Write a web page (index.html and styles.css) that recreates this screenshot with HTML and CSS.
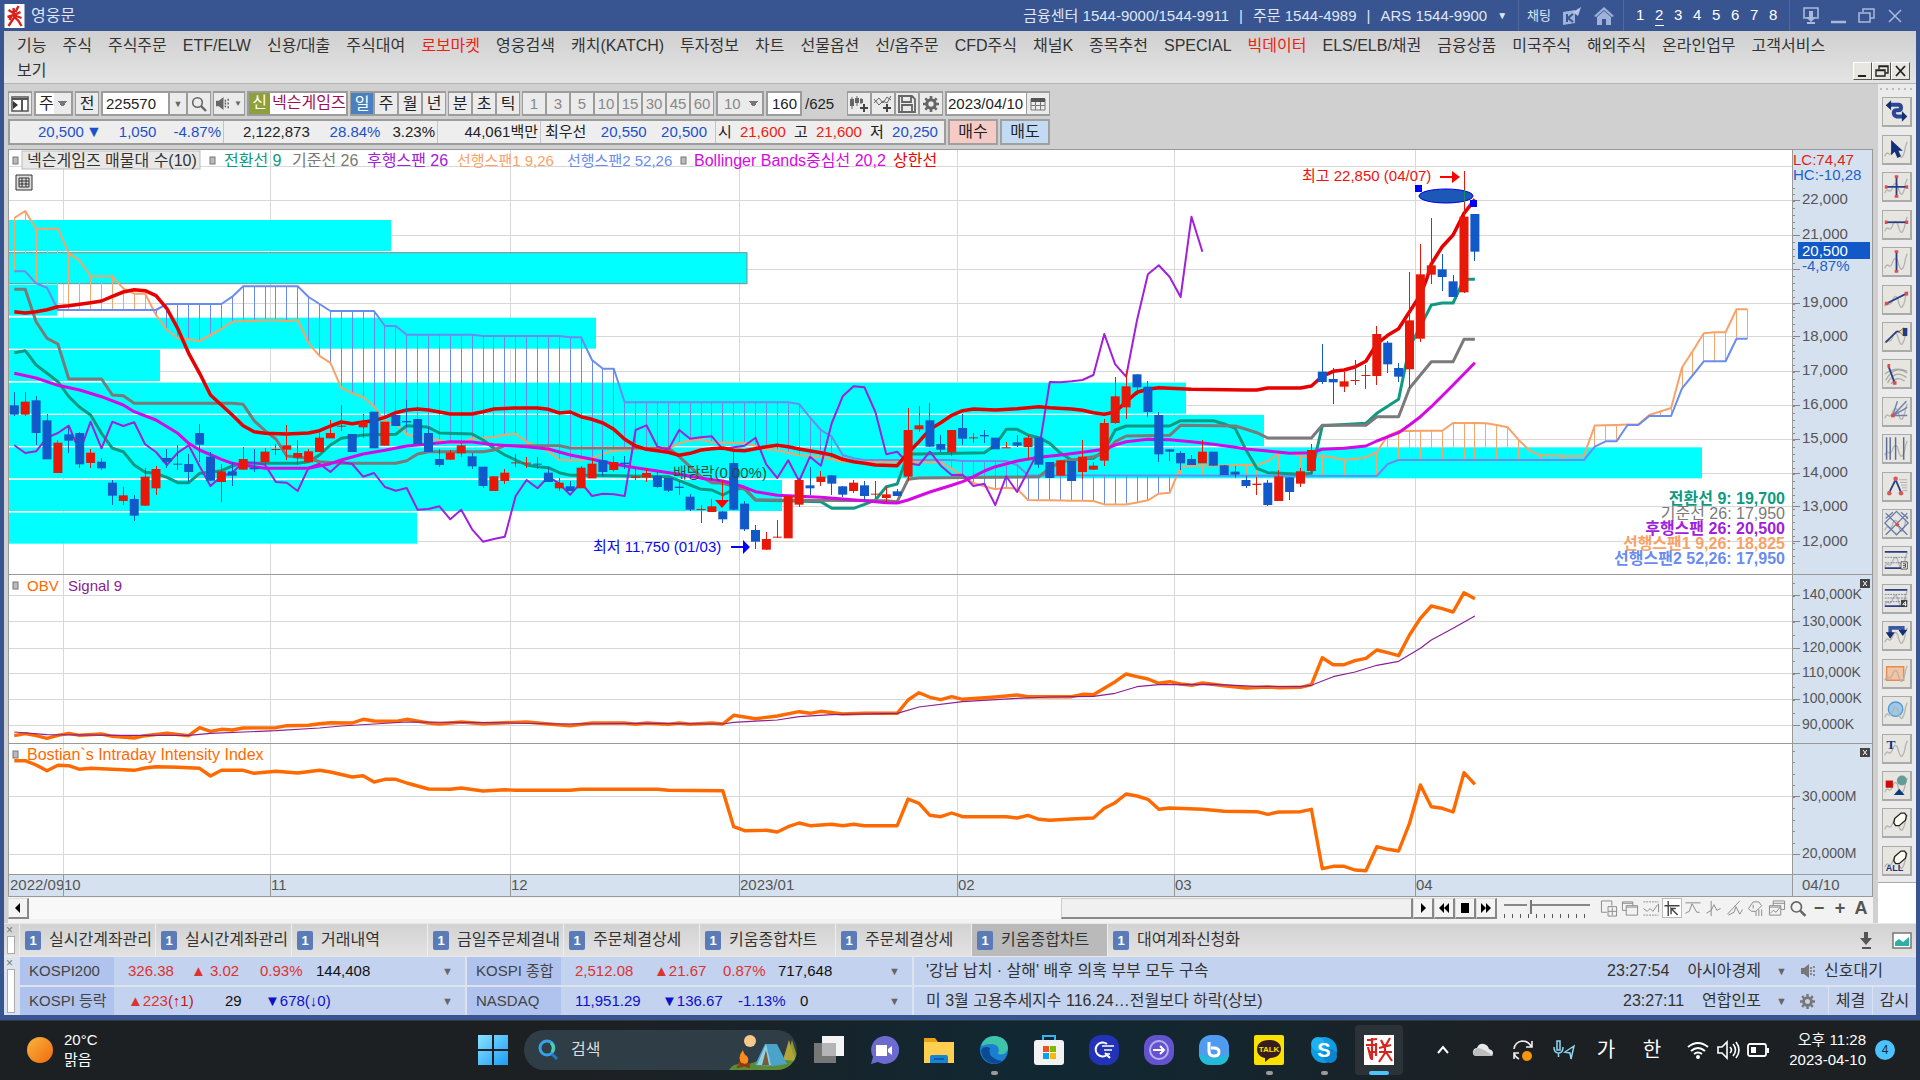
FILE: index.html
```html
<!DOCTYPE html>
<html lang="ko">
<head>
  <meta charset="UTF-8" />
  <meta name="viewport" content="width=device-width, initial-scale=1.0" />
  <title>영웅문</title>
  <link rel="stylesheet" href="styles.css">
</head>
<body>
  <svg class="defs" aria-hidden="true">
    <symbol id="wave" viewBox="0 0 30 29"><path d="M2 22q2-5 4-3t4-2q3-9 6-4q3 12 5 10q3-3 4-12l2-5" fill="none" stroke="#b4b4b0" stroke-width="1.5"/></symbol>
    <symbol id="gear" viewBox="0 0 16 16"><circle cx="8" cy="8" r="4.2" fill="none" stroke="currentColor" stroke-width="3"/><path d="M8 0v3M8 13v3M0 8h3M13 8h3M2.3 2.3l2 2M11.7 11.7l2 2M13.7 2.3l-2 2M4.3 11.7l-2 2" stroke="currentColor" stroke-width="2.6"/></symbol>
    <symbol id="glass" viewBox="0 0 16 16"><circle cx="6.5" cy="6.5" r="4.8" fill="none" stroke="currentColor" stroke-width="1.6"/><path d="M10 10l5 5" stroke="currentColor" stroke-width="2.4"/></symbol>
    <symbol id="speaker" viewBox="0 0 16 16"><path d="M0 5h3l5-4v14l-5-4H0z" fill="currentColor"/><path d="M10 4v2M10 7v2M10 10v2M13 3v2M13 7v2M13 11v2" stroke="currentColor" stroke-width="1.6"/></symbol>
  </svg>

  <div class="window">
    <!-- 타이틀바 -->
    <header class="titlebar">
      <svg class="app-icon" viewBox="0 0 20 24"><path fill="#fff" d="M0 0h20v24H0z"/><path d="M14 2l-3 6M4 6l5 3M16 8l-6 3M3 13l6-2 8 3M9 4l1 9-6 9M10 13l4 4 3 5M7 12l-2 4" fill="none" stroke="#d8201c" stroke-width="2.4"/></svg>
      <h1>영웅문</h1>
      <div class="contacts">
        <span>금융센터 1544-9000/1544-9911</span><i>|</i><span>주문 1544-4989</span><i>|</i><span>ARS 1544-9900</span><span class="caret">▼</span>
      </div>
      <div class="title-tools">
        <button class="chat">채팅</button>
        <svg width="20" height="20" viewBox="0 0 20 20"><path d="M1 6l12-2v13l-12 2z" fill="#9fb2da"/><path d="M5 8v8M11 8l-5 4 5 4" stroke="#385591" fill="none" stroke-width="2"/><path d="M11 6l8-5-3 9z" fill="#b7c6e8"/></svg>
        <svg width="22" height="20" viewBox="0 0 22 20"><path d="M11 1L1 10l2 1 8-7 8 7 2-1z" fill="#9fb2da"/><path d="M4 11l7-6 7 6v8h-5v-6H9v6H4z" fill="#9fb2da"/></svg>
      </div>
      <nav class="screens">
        <a href="#">1</a><a href="#" class="on">2</a><a href="#">3</a><a href="#">4</a><a href="#">5</a><a href="#">6</a><a href="#">7</a><a href="#">8</a>
      </nav>
      <div class="win-buttons">
        <button aria-label="화면"><svg width="18" height="18" viewBox="0 0 18 18"><path d="M2 1h14v10H2z" fill="none" stroke="#a9b9dc" stroke-width="1.6"/><path d="M7 4h4v6h3l-5 5-5-5h3zM5 15h8v2H5z" fill="#a9b9dc"/></svg></button>
        <button aria-label="최소화"><svg width="18" height="18" viewBox="0 0 18 18"><path d="M1 15h15" stroke="#a9b9dc" stroke-width="2.5"/></svg></button>
        <button aria-label="복원"><svg width="18" height="18" viewBox="0 0 18 18"><path d="M5 5V2h11v9h-4M1 6h11v9H1z" fill="none" stroke="#a9b9dc" stroke-width="1.5"/></svg></button>
        <button aria-label="닫기"><svg width="18" height="18" viewBox="0 0 18 18"><path d="M3 3l12 12M15 3L3 15" stroke="#a9b9dc" stroke-width="1.5"/></svg></button>
      </div>
    </header>

    <!-- 메뉴 -->
    <div class="menubar">
      <nav class="menu">
        <a href="#">기능</a><a href="#">주식</a><a href="#">주식주문</a><a href="#">ETF/ELW</a><a href="#">신용/대출</a><a href="#">주식대여</a><a href="#" class="hot">로보마켓</a><a href="#">영웅검색</a><a href="#">캐치(KATCH)</a><a href="#">투자정보</a><a href="#">차트</a><a href="#">선물옵션</a><a href="#">선/옵주문</a><a href="#">CFD주식</a><a href="#">채널K</a><a href="#">종목추천</a><a href="#">SPECIAL</a><a href="#" class="hot">빅데이터</a><a href="#">ELS/ELB/채권</a><a href="#">금융상품</a><a href="#">미국주식</a><a href="#">해외주식</a><a href="#">온라인업무</a><a href="#">고객서비스</a>
      </nav>
      <div class="menu-second">
        <a href="#">보기</a>
        <div class="mdi">
          <button aria-label="창 최소화"><svg width="14" height="14" viewBox="0 0 14 14"><path d="M2 12h8" stroke="#222" stroke-width="2"/></svg></button>
          <button aria-label="창 복원"><svg width="14" height="14" viewBox="0 0 14 14"><path d="M4 5V2h9v7h-3M1 6h9v6H1zM4 2.500h9M1 6.500h9" fill="none" stroke="#222" stroke-width="1.4"/></svg></button>
          <button aria-label="창 닫기"><svg width="14" height="14" viewBox="0 0 14 14"><path d="M2 2l9 10M11 2L2 12" stroke="#222" stroke-width="1.8"/></svg></button>
        </div>
      </div>
    </div>

    <div class="workspace">
      <main class="chart-window">
        <!-- 종목 툴바 -->
        <div class="toolbar">
          <button class="btn" aria-label="패널"><svg width="18" height="16" viewBox="0 0 18 16"><path d="M1 1h16v14H1z" fill="#fff" stroke="#555" stroke-width="1.500"/><path d="M1 3h16M11 3v12" stroke="#555" stroke-width="2"/><path d="M2 5l5 4-5 4z" fill="#333"/></svg></button>
          <select class="field kind" aria-label="구분"><option>주</option></select>
          <button class="btn">전</button>
          <div class="group">
            <input class="field code" aria-label="종목코드" value="225570"><button class="btn narrow">▼</button><button class="btn" aria-label="검색"><svg width="16" height="16" color="#666"><use href="#glass"/></svg></button>
          </div>
          <div class="group">
            <button class="btn short" aria-label="소리"><svg width="15" height="15" color="#666"><use href="#speaker"/></svg></button><button class="btn thin">▼</button>
          </div>
          <div class="stock"><b>신</b><span>넥슨게임즈</span></div>
          <div class="group period">
            <button class="btn on">일</button><button class="btn">주</button><button class="btn">월</button><button class="btn">년</button>
          </div>
          <div class="group period">
            <button class="btn">분</button><button class="btn">초</button><button class="btn">틱</button>
          </div>
          <div class="group period off">
            <button class="btn">1</button><button class="btn">3</button><button class="btn">5</button><button class="btn">10</button><button class="btn">15</button><button class="btn">30</button><button class="btn">45</button><button class="btn">60</button>
          </div>
          <select class="field tick" aria-label="틱 단위" disabled><option>10</option></select>
          <label class="count"><input class="field" value="160"><span>/625</span></label>
          <div class="group icons">
            <button class="btn" aria-label="차트 추가"><svg width="20" height="18" viewBox="0 0 20 18"><path d="M3 2v12M8 1v10M12 3v6" stroke="#666" stroke-width="1"/><path d="M1 4h4v7H1zM6 3h4v5H6zM11 4h3v4h-3z" fill="#666"/><path d="M15 9v8M11 13h8" stroke="#444" stroke-width="2"/></svg></button>
            <button class="btn" aria-label="지표 추가"><svg width="20" height="18" viewBox="0 0 20 18"><path d="M1 8l5-5 4 5 4-6 4 3M1 4l5 6 4-4 4 2 4-7" stroke="#666" fill="none"/><path d="M14 9v8M10 13h8" stroke="#444" stroke-width="2"/></svg></button>
            <button class="btn" aria-label="저장"><svg width="18" height="18" viewBox="0 0 18 18"><path d="M1 1h13l3 3v13H1zM4 1v6h9V1M4 17v-7h10v7" fill="none" stroke="#666" stroke-width="1.800"/></svg></button>
            <button class="btn" aria-label="설정"><svg width="16" height="16" color="#666"><use href="#gear"/></svg></button>
          </div>
          <div class="group">
            <input class="field date" aria-label="날짜" value="2023/04/10"><button class="btn" aria-label="달력"><svg width="16" height="14" viewBox="0 0 16 14"><path d="M1 2h14v11H1zM1 8.500h14M5.500 5v8M10.500 5v8" fill="none" stroke="#777"/><path d="M1 1h14v4H1z" fill="#555"/></svg></button>
          </div>
        </div>

        <div class="quote-row">
          <div class="quotes">
            <div class="cell price"><span class="blue">20,500<b>▼</b></span><span class="blue">1,050</span><span class="blue">-4.87%</span></div>
            <div class="cell vol"><span>2,122,873</span><span class="blue">28.84%</span><span>3.23%</span></div>
            <div class="cell amount"><span>44,061백만</span></div>
            <div class="cell best"><span>최우선</span><span class="blue">20,550</span><span class="blue">20,500</span></div>
            <div class="cell ohl"><span>시</span><span class="red">21,600</span><span>고</span><span class="red">21,600</span><span>저</span><span class="blue">20,250</span></div>
          </div>
          <button class="order buy">매수</button>
          <button class="order sell">매도</button>
        </div>

        <!-- 차트 -->
        <svg class="chart" id="chart" viewBox="8 149 1865 748" role="img" aria-label="넥슨게임즈 일봉 차트"></svg>

        <div class="scroll-row">
          <button class="raised" aria-label="왼쪽"><svg width="12" height="12" viewBox="0 0 12 12"><path d="M8 1v10L3 6z"/></svg></button>
          <div class="track"><div class="thumb"></div></div>
          <div class="player">
            <button class="raised" aria-label="재생"><svg width="12" height="12" viewBox="0 0 12 12"><path d="M4 1l5 5-5 5z"/></svg></button>
            <button class="raised" aria-label="뒤로"><svg width="12" height="12" viewBox="0 0 12 12"><path d="M6 1v10L1 6zM11 1v10L6 6z"/></svg></button>
            <button class="raised" aria-label="정지"><svg width="12" height="12" viewBox="0 0 12 12"><path d="M2 1h8v10H2z"/></svg></button>
            <button class="raised" aria-label="앞으로"><svg width="12" height="12" viewBox="0 0 12 12"><path d="M1 1v10l5-5zM6 1v10l5-5z"/></svg></button>
          </div>
          <input class="speed" type="range" min="0" max="100" value="28" aria-label="속도">
          <div class="chart-tools">
            <button aria-label="창 추가"><svg viewBox="0 0 18 18"><path d="M12 6V1H1v12h6M8 7h9v10H8zM12.500 8v8M8 12h9"/></svg></button>
            <button aria-label="창 복사"><svg viewBox="0 0 18 18"><path d="M5 11H1V2h11v4M5 6h12v10H5zM1 3.500h11M5 7.500h12"/></svg></button>
            <button aria-label="영역"><svg viewBox="0 0 18 18"><path d="M1 2h16M1 16h16" stroke-dasharray="2 1"/><path d="M1 9l4 3 3-3 3 3 5-7M17 4v9"/></svg></button>
            <button class="on" aria-label="십자선"><svg viewBox="0 0 18 18"><path d="M5 1v16M1 6h16M8 15V9l7 7M8 9h5" stroke="#444" stroke-width="1.500"/></svg></button>
            <button aria-label="수평선"><svg viewBox="0 0 18 18"><path d="M1 3h16M1 14l4-2 3-8 5 9h3"/></svg></button>
            <button aria-label="수직선"><svg viewBox="0 0 18 18"><path d="M6 1v16M1 14l5-3 3-6 3 6 4-2"/></svg></button>
            <button aria-label="추세선"><svg viewBox="0 0 18 18"><path d="M1 15L14 1M2 16l6-3 2-6 4 8 3-5"/></svg></button>
            <button aria-label="전체 지우기"><svg viewBox="0 0 18 18"><path d="M6 2h6l3 4-6 6H4L1 9zM6 9V5M9 12v5M12 10v7M15 10v7"/></svg></button>
            <button aria-label="차트 겹치기"><svg viewBox="0 0 18 18"><path d="M5 6V1h12v9h-4M1 6h12v10H1zM2 14l3-3 3 2 4-5M5 3.500h12M1 7.500h12"/></svg></button>
            <button aria-label="돋보기"><svg viewBox="0 0 16 16" color="#666"><use href="#glass"/></svg></button>
            <button class="glyph">−</button>
            <button class="glyph">+</button>
            <button class="glyph">A</button>
          </div>
        </div>
      </main>

      <!-- 그리기 도구 -->
      <aside class="palette">
        <div class="tools">
          <button aria-label="전환"><svg viewBox="0 0 30 29"><path d="M8 7h9q3 0 3 3t-3 3h-2q-3 0-3 3t3 4h8" fill="none" stroke="#2c4796" stroke-width="4.500"/><path d="M9 2v11L3 7.500zM21 14v12l6-6z" fill="#16306f"/></svg></button>
          <button aria-label="선택"><svg viewBox="0 0 30 29"><use href="#wave"/><path d="M9 4v17l4-4 3 7 4-2-3-6h5z" fill="#152f7c"/></svg></button>
          <button aria-label="십자"><svg viewBox="0 0 30 29"><use href="#wave"/><path d="M15 3v23M3 15h24" stroke="#2a3e86" stroke-width="2"/><path d="M13 2h4v3h-4zM13 24h4v3h-4zM2 13h3v4H2zM25 13h3v4h-3z" fill="#e34a4a"/></svg></button>
          <button aria-label="수평선"><svg viewBox="0 0 30 29"><use href="#wave"/><path d="M3 12h24" stroke="#2a3e86" stroke-width="2"/><path d="M2 10h3v4H2zM25 10h3v4h-3z" fill="#e34a4a"/></svg></button>
          <button aria-label="수직선"><svg viewBox="0 0 30 29"><use href="#wave"/><path d="M15 3v22" stroke="#2a3e86" stroke-width="2"/><path d="M13 2h4v3h-4zM13 24h4v3h-4z" fill="#e34a4a"/></svg></button>
          <button aria-label="추세선"><svg viewBox="0 0 30 29"><use href="#wave"/><path d="M4 19L26 8" stroke="#2a3e86" stroke-width="2"/><path d="M2 17h4v4H2zM24 6h4v4h-4z" fill="#e34a4a"/></svg></button>
          <button aria-label="펜"><svg viewBox="0 0 30 29"><use href="#wave"/><path d="M3 21L15 9h4" stroke="#2a3e86" stroke-width="2" fill="none"/><path d="M18 9l5-4v9z" fill="#f0d9a0" stroke="#8a6a20"/><path d="M22 5h5v9h-5z" fill="#223a86"/></svg></button>
          <button aria-label="원호"><svg viewBox="0 0 30 29"><path d="M3 22q10-18 24-8M5 25q9-16 21-6M9 26q7-10 15-3M2 15q12-9 25-3" fill="none" stroke="#a8a8a4" stroke-width="1.500"/><path d="M6 6l7 19" stroke="#2a3e86" stroke-width="2"/><path d="M5 4h3v4H5zM11 23h4v4h-4z" fill="#e34a4a"/></svg></button>
          <button aria-label="부채꼴"><svg viewBox="0 0 30 29"><use href="#wave"/><path d="M11 19L16 3M11 19L26 3M11 19l16-9M11 19h16" stroke="#7280ad" stroke-width="1.600"/><path d="M9 17h4v4H9z" fill="#e34a4a"/></svg></button>
          <button aria-label="시간대"><svg viewBox="0 0 30 29"><use href="#wave"/><path d="M4 2v25M8 2v25M14 2v25M23 2v25" stroke="#5b6b9e" stroke-width="1.600"/></svg></button>
          <button aria-label="파동"><svg viewBox="0 0 30 29"><path d="M18 7h9M19 10h8M20 13h7M21 16h6M22 19h5" stroke="#aaa"/><path d="M7 21l7-14 6 14" fill="none" stroke="#2a3e86" stroke-width="2"/><g fill="#dd5656"><circle cx="14" cy="6" r="2.500"/><circle cx="7" cy="22" r="2.500"/><circle cx="20" cy="22" r="2.500"/></g></svg></button>
          <button aria-label="격자"><svg viewBox="0 0 30 29"><use href="#wave"/><path d="M3 3l24 24M27 3L3 27M15 1l13 13-13 13L2 14zM3 9l8-7M20 2l8 7" fill="none" stroke="#6878ac" stroke-width="1.400"/><circle cx="16" cy="16" r="2" fill="#e34a4a"/></svg></button>
          <button aria-label="3분할"><svg viewBox="0 0 30 29"><use href="#wave"/><path d="M2 5h25M2 23h18" stroke="#2a3e86" stroke-width="2"/><path d="M2 11h25M2 17h25" stroke="#7280ad" stroke-dasharray="2 1"/><path d="M20 16h7v8h-7zM22 18h3v4h-3M22 20h3" fill="#fff" stroke="#444"/></svg></button>
          <button aria-label="4분할"><svg viewBox="0 0 30 29"><use href="#wave"/><path d="M2 5h25M2 23h18" stroke="#2a3e86" stroke-width="2"/><path d="M2 10h25M2 14h25M2 18h25" stroke="#7280ad" stroke-dasharray="2 1"/><path d="M20 16h7v8h-7z" fill="#444"/><path d="M25 23v-5l-3 3h4" fill="none" stroke="#fff"/></svg></button>
          <button aria-label="되돌리기"><svg viewBox="0 0 30 29"><use href="#wave"/><path d="M8 12V6h14v4" fill="none" stroke="#3a59a8" stroke-width="4"/><path d="M3 11h10l-5 7zM17 8h10l-5 7z" fill="#16306f"/></svg></button>
          <button aria-label="사각형"><svg viewBox="0 0 30 29"><path d="M4 7h19v15H4z" fill="#f4c3a0" stroke="#e58a50" stroke-width="1.500"/><use href="#wave"/></svg></button>
          <button aria-label="원"><svg viewBox="0 0 30 29"><circle cx="14" cy="13" r="8" fill="#9ec8ea" stroke="#4f9ad6" stroke-width="1.500"/><use href="#wave"/></svg></button>
          <button aria-label="텍스트"><svg viewBox="0 0 30 29"><use href="#wave"/><text x="4" y="15" class="tool-t">T</text></svg></button>
          <button aria-label="도형"><svg viewBox="0 0 30 29"><use href="#wave"/><path d="M3 9h8v8H3z" fill="#cf0a0a"/><circle cx="21" cy="9" r="5.500" fill="#629c96"/><path d="M18 18l6 7H12z" fill="#0b3a80"/></svg></button>
          <button aria-label="지우개"><svg viewBox="0 0 30 29"><use href="#wave"/><path d="M13 10l7-6h4l2 3-1 5-7 6h-4l-2-3z" fill="#fffdf2" stroke="#222" stroke-width="1.500"/></svg></button>
          <button aria-label="모두 지우기"><svg viewBox="0 0 30 29"><use href="#wave"/><path d="M13 10l7-6h4l2 3-1 5-7 6h-4l-2-3z" fill="#fffdf2" stroke="#222" stroke-width="1.500"/><text x="3" y="26" class="tool-all">ALL</text></svg></button>
        </div>
      </aside>
    </div>

    <!-- 화면 탭 -->
    <div class="tabs">
      <div class="grip">×</div>
      <button class="tab"><b>1</b>실시간계좌관리</button>
      <button class="tab"><b>1</b>실시간계좌관리</button>
      <button class="tab"><b>1</b>거래내역</button>
      <button class="tab"><b>1</b>금일주문체결내</button>
      <button class="tab"><b>1</b>주문체결상세</button>
      <button class="tab"><b>1</b>키움종합차트</button>
      <button class="tab"><b>1</b>주문체결상세</button>
      <button class="tab on"><b>1</b>키움종합차트</button>
      <button class="tab"><b>1</b>대여계좌신청화</button>
      <div class="tab-tools">
        <button aria-label="내리기"><svg width="12" height="17" viewBox="0 0 12 17"><path d="M4 0h4v6h4l-6 7-6-7h4zM2 15h9v2H2z" fill="#555"/></svg></button>
        <button aria-label="그림"><svg width="20" height="17" viewBox="0 0 20 17"><path d="M1 1h18v15H1z" fill="#fff" stroke="#777" stroke-width="1.500"/><path d="M3 14v-4l4-3 4 3 6-5v9z" fill="#2fb0a2"/></svg></button>
      </div>
    </div>

    <!-- 지수 / 뉴스 -->
    <footer class="ticker">
      <div class="grip">×</div>
      <div class="index first">
        <div class="line"><span class="name">KOSPI200</span><span class="up c1">326.38</span><span class="up c2">▲ 3.02</span><span class="up c3">0.93%</span><span>144,408</span><i>▼</i></div>
        <div class="line"><span class="name">KOSPI 등락</span><span class="up d1">▲223<em>(↑1)</em></span><span class="d2">29</span><span class="down">▼678(↓0)</span><i>▼</i></div>
      </div>
      <div class="index">
        <div class="line"><span class="name">KOSPI 종합</span><span class="up e1">2,512.08</span><span class="up e2">▲21.67</span><span class="up e3">0.87%</span><span>717,648</span><i>▼</i></div>
        <div class="line"><span class="name">NASDAQ</span><span class="down n1">11,951.29</span><span class="down n2">▼136.67</span><span class="down n3">-1.13%</span><span>0</span><i>▼</i></div>
      </div>
      <div class="news">
        <div class="line"><a href="#">'강남 납치 · 살해' 배후 의혹 부부 모두 구속</a><time>23:27:54</time><span class="press">아시아경제</span><i>▼</i><button class="wait"><svg width="18" height="16"><use href="#speaker"/></svg>신호대기</button></div>
        <div class="line"><a href="#">미 3월 고용추세지수 116.24…전월보다 하락(상보)</a><time>23:27:11</time><span class="press">연합인포</span><i>▼</i><button class="set" aria-label="설정"><svg width="15" height="15"><use href="#gear"/></svg></button><button class="box">체결</button><button class="box">감시</button></div>
      </div>
    </footer>
  </div>

  <!-- 작업 표시줄 -->
  <div class="taskbar">
    <div class="weather"><span class="sun"></span><p>20°C<br>맑음</p></div>
    <div class="apps">
      <button class="start" aria-label="시작"><svg width="30" height="30" viewBox="0 0 30 30"><path d="M0 0h14v14H0zM16 0h14v14H16zM0 16h14v14H0zM16 16h14v14H16z" fill="url(#win)"/><defs><linearGradient id="win" x1="0" y1="0" x2="1" y2="1"><stop stop-color="#8ae2ff"/><stop offset="1" stop-color="#1a9cf6"/></linearGradient></defs></svg></button>
      <label class="search"><svg width="22" height="22" viewBox="0 0 22 22"><circle cx="10" cy="9" r="7" fill="none" stroke="#35a3e6" stroke-width="3"/><path d="M14 4q4 4 1 9" fill="none" stroke="#4fd39a" stroke-width="3"/><path d="M15 15l5 5" stroke="#1f78cc" stroke-width="3"/></svg><input type="text" placeholder="검색">
        <svg class="camp" width="68" height="40" viewBox="0 0 68 40"><path d="M0 40q4-8 20-6q20-8 48-4v3q-4 7-12 7z" fill="#5d8a35"/><circle cx="21" cy="11" r="6" fill="#f6c98a"/><path d="M57 30l6-20 5 16v6z" fill="#8d9c2c"/><path d="M60 10l-6 20h12z" fill="#b0a43a"/><path d="M36 14l12 0 10 20-14 2-18-1z" fill="#4aa3c8"/><path d="M37 14l5 21H28z" fill="#8fd0e6"/><path d="M37 20l3 15h-7z" fill="#7b5b35"/><path d="M14 36q-7-8 0-16q1 5 4 6q4 6-4 10z" fill="#ff8a1c"/><path d="M8 37l13-3M9 33l12 4" stroke="#8a3f12" stroke-width="2.500"/></svg></label>
      <button aria-label="작업 보기"><svg viewBox="0 0 30 30"><path d="M0 8h22v20H0z" fill="#777"/><path d="M8 1h22v20H8z" fill="#f4f4f4"/><path d="M8 8h14v13H8z" fill="#b5b5b5"/></svg></button>
      <button aria-label="채팅"><svg viewBox="0 0 30 30"><path d="M15 1a14 14 0 1 1-6 26l-7 2 2-7A14 14 0 0 1 15 1z" fill="#6d6ad0"/><path d="M7 10h11v11H7zM19 14l4-3v9l-4-3z" fill="#fff"/></svg></button>
      <button aria-label="탐색기"><svg viewBox="0 0 30 30"><path d="M0 3h11l3 4h14v6H0z" fill="#e7a11a"/><path d="M0 7h30v21H0z" fill="#ffd04f"/><path d="M6 28v-6q0-2 2-2h14q2 0 2 2v6z" fill="#1583d8"/><path d="M10 24h10" stroke="#0c5ca8" stroke-width="2"/></svg></button>
      <button class="run" aria-label="엣지"><svg viewBox="0 0 30 30"><circle cx="15" cy="15" r="14" fill="#1a7fd0"/><path d="M2 11Q6 0 17 1q12 2 12 13q-2 7-10 5q3-9-6-10q-6 0-11 2z" fill="#3fc3a8"/><path d="M11 13q-3 10 12 13q-6 5-14 1q-7-5-7-12q3-5 9-2z" fill="#0c4a94"/></svg></button>
      <button aria-label="스토어"><svg viewBox="0 0 30 30"><path d="M9 6V1h12v5" fill="none" stroke="#37b4ee" stroke-width="2"/><rect y="5" width="30" height="25" rx="3" fill="#f2f2f2"/><path d="M9 11h6v6H9z" fill="#f25022"/><path d="M16 11h6v6h-6z" fill="#7fba00"/><path d="M9 18h6v6H9z" fill="#00a4ef"/><path d="M16 18h6v6h-6z" fill="#ffb900"/></svg></button>
      <button aria-label="검색앱"><svg viewBox="0 0 30 30"><rect width="30" height="30" rx="12" fill="#2233b8"/><path d="M18 9a7 7 0 1 0 0 11M16 18l5 5" fill="none" stroke="#fff" stroke-width="2"/><path d="M13 11h12M15 15h8M17 19h4" stroke="#fff" stroke-width="1.500"/></svg></button>
      <button aria-label="전송앱"><svg viewBox="0 0 30 30"><rect width="30" height="30" rx="12" fill="#6353cf"/><circle cx="15" cy="15" r="9" fill="none" stroke="#b9b0f4" stroke-width="2"/><path d="M9 15h11M16 11l4 4-4 4" fill="none" stroke="#fff" stroke-width="2"/></svg></button>
      <button aria-label="빅스비"><svg viewBox="0 0 30 30"><rect width="30" height="30" rx="12" fill="#4f9bf0"/><path d="M0 18q14 10 30 0q0 12-12 12H12Q0 30 0 18z" fill="#23bcd8"/><path d="M10 7v9q0 5 5 5t5-4-5-4h-3" fill="none" stroke="#fff" stroke-width="3"/></svg></button>
      <button class="run" aria-label="카카오톡"><svg viewBox="0 0 30 30"><rect width="30" height="30" rx="2" fill="#fae100"/><path d="M15 5c8 0 12 4 12 9s-4 9-11 9l-5 4v-4c-5-1-8-4-8-9s4-9 12-9z" fill="#371d1e"/><text x="15" y="17" class="talk">TALK</text></svg></button>
      <button class="run" aria-label="스카이프"><svg viewBox="0 0 30 30"><circle cx="15" cy="15" r="13" fill="#0d9de3"/><circle cx="9" cy="9" r="7" fill="#1eb0f0"/><circle cx="21" cy="21" r="7" fill="#0d84d0"/><text x="15" y="22" class="skype">S</text></svg></button>
      <button class="run active" aria-label="영웅문"><svg viewBox="0 0 30 30"><path fill="#fff" d="M0 0h30v30H0z"/><path d="M3 5l10-1M2 10h11M8 3v22M4 12l3 12M12 8v13M5 17h8M17 5l3 6M26 3l-4 7M15 13l12-3M15 17l13 0M21 9v9l-6 9M22 17l6 9" fill="none" stroke="#d6241f" stroke-width="2.200"/></svg></button>
    </div>
    <div class="tray">
      <button aria-label="숨겨진 아이콘"><svg viewBox="0 0 24 24"><path d="M7 15l5-6 5 6" fill="none" stroke="#fff" stroke-width="2"/></svg></button>
      <button aria-label="클라우드"><svg viewBox="0 0 24 24"><path d="M5 18q-4-1-3-5 1-3 4-3 2-5 7-4 4 1 5 5 4 1 4 4t-3 3z" fill="#e8e8e8"/><path d="M2 14q2-4 6-4 5 1 14 8H5q-3 0-3-4z" fill="#bdbdbd"/></svg></button>
      <button aria-label="동기화"><svg viewBox="0 0 24 24"><path d="M3 11q1-7 8-8 6 0 9 5M21 3v6h-6M3 15q1 4 5 6M3 21v-6h5" fill="none" stroke="#eee" stroke-width="1.600"/><circle cx="16" cy="18" r="5" fill="#f7960b"/></svg></button>
      <button aria-label="위치"><svg viewBox="0 0 24 24"><path d="M6 3h3v9H6zM3 9q0 6 4.500 6T12 9M7.500 15v4M23 8l-9 6 5 1 1 6z" fill="none" stroke="#8fd6f2" stroke-width="1.500"/></svg></button>
      <button class="ime">가</button>
      <button class="ime">한</button>
      <div class="status">
        <svg viewBox="0 0 24 24"><path d="M2 9q10-8 20 0M5 13q7-6 14 0M8 16q4-3 8 0" fill="none" stroke="#fff" stroke-width="2"/><circle cx="12" cy="19" r="2" fill="#fff"/></svg>
        <svg viewBox="0 0 24 24"><path d="M2 9h4l5-5v16l-5-5H2zM14 9q3 3 0 6M17 6q5 6 0 12M20 4q6 8 0 16" fill="none" stroke="#fff" stroke-width="1.600"/></svg>
        <svg viewBox="0 0 24 24"><rect x="2" y="6" width="18" height="12" rx="2" fill="none" stroke="#fff" stroke-width="1.800"/><path d="M5 9h5v6H5zM21 10h2v5h-2z" fill="#fff"/></svg>
      </div>
      <p class="clock">오후 11:28<br>2023-04-10</p>
      <span class="notice">4</span>
    </div>
  </div>

  <script src="chart.js"></script>
</body>
</html>
```
FILE: styles.css
```css
* {
  box-sizing: border-box;
}
body {
  margin: 0;
  font-family: "Liberation Sans", "Noto Sans CJK KR", sans-serif;
  font-size: 16px;
  line-height: 20px;
  color: #333;
  background: #1d2023;
}
button, input, select {
  font: inherit;
  color: inherit;
  margin: 0;
  padding: 0;
  border: 0;
  background: none;
}
a {
  color: inherit;
  text-decoration: none;
}
h1, p {
  margin: 0;
  font-size: 16px;
  font-weight: normal;
}
svg {
  display: block;
}
i, em {
  font-style: normal;
}
.defs {
  position: absolute;
  width: 0;
  height: 0;
}
.window {
  border: solid #385591;
  border-width: 0 4px 5px;
  background: #d0d0d0;
}

/* title bar */
.titlebar {
  display: flex;
  align-items: center;
  height: 31px;
  background: #385591;
  color: #dfe6f5;
}
.app-icon {
  width: 21px;
  height: 24px;
  margin-right: 6px;
}
.contacts {
  display: flex;
  gap: 10px;
  align-items: center;
  margin-left: auto;
  padding-right: 11px;
  font-size: 15px;
}
.caret {
  font-size: 10px;
}
.title-tools {
  display: flex;
  align-items: center;
  gap: 11px;
  height: 31px;
  padding: 0 8px;
  border-left: 1px solid #5068a0;
  border-right: 1px solid #5068a0;
}
.chat {
  font-size: 13px;
}
.screens {
  display: flex;
  gap: 10px;
  padding: 0 11px 0 12px;
  font-size: 15px;
}
.screens a {
  width: 9px;
  color: #fff;
}
.screens .on {
  border-bottom: 1px solid #fff;
}
.win-buttons {
  display: flex;
  align-items: center;
  gap: 10px;
  height: 31px;
  padding: 0 12px 0 12px;
  border-left: 1px solid #5068a0;
}

/* menu */
.menubar {
  height: 53px;
  padding-top: 4px;
  background: linear-gradient(#d0d0d0, #e4e4e4);
  border-bottom: 1px solid #b4b4b4;
}
.menu {
  display: flex;
  gap: 16px;
  height: 22px;
  padding-left: 13px;
  align-items: center;
  white-space: nowrap;
}
.hot {
  color: #f02010;
}
.menu-second {
  display: flex;
  justify-content: space-between;
  align-items: center;
  height: 27px;
  padding: 0 6px 0 13px;
}
.mdi {
  display: flex;
}
.mdi button {
  display: grid;
  place-items: center;
  width: 19px;
  height: 18px;
  background: #e8e6e0;
  border: 1px solid #fff;
  border-right-color: #555;
  border-bottom-color: #555;
}

/* workspace */
.workspace {
  display: flex;
  padding-left: 4px;
}
.chart-window {
  flex: 1;
  min-width: 0;
  padding-top: 7px;
}
.toolbar {
  display: flex;
  gap: 2px;
  height: 25px;
  color: #222;
}
.group {
  display: flex;
}
.btn {
  display: grid;
  place-items: center;
  width: 24px;
  height: 25px;
  background: #ebebeb;
  border: 2px solid #9c9c9c;
  border-left-width: 1px;
  border-right-width: 1px;
}
.narrow {
  width: 17px;
  font-size: 9px;
  border-left: 0;
  color: #666;
}
.short {
  width: 19px;
  border-right: 0;
}
.thin {
  width: 13px;
  font-size: 8px;
  border-left: 0;
  color: #666;
}
.field {
  height: 25px;
  padding: 0 3px;
  background: #fff;
  border: 2px solid #9c9c9c;
}
select.field {
  appearance: none;
  background:
    conic-gradient(from -40deg at 50% 100%, #777 0 80deg, transparent 0) right 4px top 8px / 8px 5px no-repeat,
    linear-gradient(#ebebeb, #ebebeb) right / 17px 100% no-repeat,
    #fff;
  background:
    linear-gradient(#777, #777) right 4px top 8px / 9px 1px no-repeat,
    linear-gradient(#777, #777) right 5px top 9px / 7px 1px no-repeat,
    linear-gradient(#777, #777) right 6px top 10px / 5px 2px no-repeat,
    linear-gradient(#777, #777) right 7px top 12px / 3px 1px no-repeat,
    linear-gradient(#ebebeb, #ebebeb) right / 17px 100% no-repeat,
    #fff;
}
.kind {
  width: 39px;
}
.code {
  width: 69px;
  font-size: 15px;
}
.stock {
  display: flex;
  width: 101px;
  background: #fff;
  border: 2px solid #9c9c9c;
  color: #a01058;
  white-space: nowrap;
}
.stock b {
  width: 21px;
  background: #8ea03a;
  color: #fff;
  font-weight: normal;
  text-align: center;
}
.stock span {
  padding-left: 2px;
}
.period .on {
  background: #4a80c0;
  color: #fff;
}
.off .btn {
  color: #888;
  font-size: 15px;
}
.tick {
  width: 48px;
  padding-left: 6px;
  color: #888;
  opacity: 1;
  font-size: 15px;
}
select.tick {
  background-color: #ebebeb;
}
.count {
  display: flex;
  align-items: center;
  gap: 3px;
  width: 79px;
  font-size: 15px;
}
.count .field {
  width: 36px;
  text-align: right;
}
.date {
  width: 81px;
  padding: 0 0 0 1px;
  border-right: 0;
  font-size: 15px;
}

.quote-row {
  display: flex;
  gap: 2px;
  height: 26px;
  margin: 3px 0 4px;
  color: #222;
}
.quotes {
  display: flex;
  width: 938px;
  background: #eee;
  border: 2px solid #9c9c9c;
  font-size: 15px;
}
.cell {
  display: flex;
  align-items: center;
  justify-content: space-between;
  padding: 0 2px;
  border-right: 1px solid #c4c4c4;
  white-space: nowrap;
}
.cell:last-child {
  border: 0;
}
.price {
  width: 214px;
  padding-left: 28px;
}
.price b {
  padding-left: 2px;
  font-size: 16px;
}
.vol {
  width: 214px;
  padding-left: 19px;
}
.vol .blue {
  margin: 0 12px 0 auto;
}
.amount {
  width: 103px;
  justify-content: flex-end;
}
.best {
  width: 175px;
  padding: 0 8px 0 4px;
}
.ohl {
  flex: 1;
  padding-right: 6px;
}
.blue {
  color: #1d50cc;
}
.red {
  color: #f01c10;
}
.order {
  width: 50px;
  border: 2px solid #a0a0a0;
}
.buy {
  background: #f6cbc6;
}
.sell {
  background: #c2dbf2;
}

/* chart drawing */
.chart {
  width: 100%;
  height: auto;
  background: #fff;
  font-size: 15px;
}
.chart text {
  fill: #555;
}
.chart .t14 {
  font-size: 14px;
}
.chart .t16 {
  font-size: 16px;
}
.chart .bold {
  font-weight: bold;
}
.chart line {
  shape-rendering: crispEdges;
}
.chart polyline {
  fill: none;
  stroke-linejoin: round;
}

/* scroll bar row */
.scroll-row {
  display: flex;
  align-items: center;
  height: 26px;
  padding-bottom: 4px;
  background: #f2f2f2;
}
.raised {
  display: grid;
  place-items: center;
  width: 21px;
  height: 21px;
  background: #f4f4f4;
  border: 1px solid #ddd;
  border-right: 2px solid #888;
  border-bottom: 2px solid #888;
}
.track {
  flex: 1;
  height: 21px;
  background: #f8f8f8;
}
.thumb {
  width: 352px;
  height: 21px;
  margin-left: auto;
  background: #f0f0f0;
  border: 1px solid #ccc;
  border-right: 2px solid #888;
  border-bottom: 2px solid #888;
}
.player {
  display: flex;
}
.speed {
  appearance: none;
  width: 86px;
  height: 20px;
  margin: 0 9px 0 7px;
  background:
    linear-gradient(#888, #888) 0 6px / 100% 2px no-repeat,
    repeating-linear-gradient(90deg, #555 0 1px, transparent 1px 8px) 0 16px / 100% 4px no-repeat;
}
.speed::-webkit-slider-thumb {
  appearance: none;
  width: 5px;
  height: 14px;
  margin-bottom: 3px;
  background: #eee;
  border-right: 2px solid #777;
}
.chart-tools {
  display: flex;
  width: 274px;
  justify-content: space-between;
  padding-right: 2px;
}
.chart-tools button {
  display: grid;
  place-items: center;
  width: 20px;
  height: 20px;
}
.chart-tools svg {
  width: 18px;
  height: 17px;
  fill: none;
  stroke: #888;
}
.chart-tools .on {
  background: #fff;
  border: 1px solid #bbb;
}
.chart-tools .glyph {
  color: #555;
  font-size: 18px;
  font-weight: bold;
}

/* palette */
.palette {
  width: 38px;
  margin-left: 5px;
  background: #fff;
}
.tools {
  display: flex;
  flex-direction: column;
  justify-content: space-between;
  height: 799px;
  padding: 14px 4px 6px;
  background: #ebebeb;
  border-bottom: 1px solid #aaa;
}
.tools::before {
  content: "";
  width: 34px;
  height: 2px;
  margin: -10px 0 0 -2px;
  background: repeating-linear-gradient(90deg, #bbb 0 2px, transparent 2px 6px);
}
.tools button {
  width: 30px;
  height: 30px;
  background: #e6e5e0;
  border: 1px solid #aaa;
  border-width: 1px 2px 2px 1px;
}
.tools svg {
  width: 27px;
  height: 27px;
}
.tool-t {
  font: bold 15px "Liberation Serif", serif;
  fill: #1a3380;
}
.tool-all {
  font: bold 10px "Liberation Sans", sans-serif;
  fill: #1a3380;
}

/* tabs */
.tabs {
  display: flex;
  height: 34px;
  border-top: 1px solid #e8e8e8;
  border-bottom: 1px solid #e8e8e8;
  background: linear-gradient(#d2d2d2, #e2e2e2);
}
.grip {
  flex: none;
  width: 15px;
  padding-left: 2px;
  color: #777;
  font-size: 12px;
  line-height: 12px;
}
.grip::after {
  content: "";
  display: block;
  width: 6px;
  height: calc(100% - 16px);
  margin-left: 1px;
  border: 1px solid #aaa;
  background: #fff;
}
.tab {
  display: flex;
  flex: none;
  align-items: center;
  gap: 8px;
  width: 136px;
  padding-left: 5px;
  border-left: 1px solid #eee;
  white-space: nowrap;
  overflow: hidden;
}
.tab b {
  flex: none;
  width: 16px;
  height: 19px;
  background: #5b7bb8;
  border-radius: 2px;
  color: #fff;
  font-size: 13px;
}
.tab.on {
  background: #bababa;
}
.tab-tools {
  display: flex;
  gap: 20px;
  margin-left: auto;
  padding-right: 4px;
}

/* tickers */
.ticker {
  display: flex;
  gap: 2px;
  height: 58px;
  background: #dde3ee;
  font-size: 15px;
}
.ticker .grip {
  width: 14px;
  background: #dde3ee;
}
.index {
  flex: none;
  width: 445px;
}
.first em {
  color: #c01818;
}
.news {
  flex: 1;
  font-size: 16px;
}
.line {
  display: flex;
  align-items: center;
  height: 28px;
  margin-bottom: 2px;
  background: #c3d2ee;
  white-space: nowrap;
}
.name {
  width: 94px;
  height: 28px;
  margin-right: 14px;
  padding-left: 9px;
  background: #b0c3ee;
  line-height: 28px;
}
.line i {
  color: #666;
  font-size: 11px;
}
.index i {
  margin-left: auto;
  padding-right: 12px;
}
.index .line {
  color: #111;
}
.index .name {
  color: #444;
}
.line .up {
  color: #dc3230;
}
.line .down {
  color: #1010c8;
}
.c1 {
  width: 63px;
}
.c2 {
  width: 69px;
}
.c3 {
  width: 56px;
}
.d1 {
  width: 97px;
}
.d2 {
  width: 40px;
}
.e1 {
  width: 79px;
}
.e2 {
  width: 69px;
}
.e3 {
  width: 55px;
}
.n1 {
  width: 87px;
}
.n2 {
  width: 76px;
}
.n3 {
  width: 62px;
}
.news a {
  flex: 1;
  padding-left: 12px;
}
.press {
  margin: 0 15px 0 18px;
}
.news i {
  width: 24px;
}
.wait {
  display: flex;
  align-items: center;
  gap: 6px;
  width: 116px;
}
.set {
  width: 28px;
}
.wait svg, .set svg {
  color: #777;
}
.box {
  width: 44px;
  height: 28px;
  border-left: 1px solid #dde3ee;
}

/* taskbar */
.taskbar {
  display: flex;
  justify-content: space-between;
  align-items: center;
  height: 60px;
  padding-bottom: 2px;
  background: linear-gradient(90deg, #1d2023 30%, #102833 55%, #1d2023 80%);
  border-top: 1px solid #33373a;
  color: #fff;
}
.weather {
  display: flex;
  width: 478px;
  align-items: center;
  gap: 11px;
  padding-left: 27px;
}
.sun {
  width: 26px;
  height: 26px;
  border-radius: 50%;
  background: linear-gradient(135deg, #f8b53c, #f06a10);
}
.weather p, .clock {
  font-size: 15px;
}
.apps {
  display: flex;
  flex: 1;
  align-items: center;
}
.apps > button {
  position: relative;
  display: grid;
  place-items: center;
  width: 48px;
  height: 50px;
  margin-right: 7px;
  border-radius: 4px;
}
.apps > button svg {
  width: 30px;
  height: 30px;
}
.apps > .start {
  width: 30px;
  margin-right: 16px;
}
.search {
  display: flex;
  align-items: center;
  gap: 12px;
  width: 273px;
  height: 40px;
  margin-right: 8px;
  padding-left: 13px;
  border-radius: 20px;
  background: #2f3d46;
  overflow: hidden;
}
.search svg {
  flex: none;
}
.search input {
  width: 146px;
}
.search input::placeholder {
  color: #dcdcdc;
  opacity: 1;
}
.talk {
  font-size: 8px;
  font-weight: bold;
  fill: #fae100;
  text-anchor: middle;
}
.skype {
  font-size: 20px;
  font-weight: bold;
  fill: #fff;
  text-anchor: middle;
}
.run::after {
  content: "";
  position: absolute;
  bottom: 0;
  width: 7px;
  height: 4px;
  border-radius: 2px;
  background: #9a9a9a;
}
.apps .active {
  background: #2c3338;
}
.active::after {
  width: 20px;
  background: #4cc2ff;
}
.tray {
  display: flex;
  align-items: center;
  padding-right: 25px;
}
.tray button {
  width: 40px;
}
.tray svg {
  width: 24px;
  height: 24px;
  margin: 0 auto;
}
.tray .ime {
  width: 46px;
  font-size: 20px;
}
.status {
  display: flex;
  gap: 6px;
  padding: 0 10px 0 11px;
}
.clock {
  width: 86px;
  text-align: right;
}
.notice {
  width: 20px;
  height: 20px;
  margin-left: 9px;
  border-radius: 50%;
  background: #4cc2ff;
  color: #10303f;
  font-size: 12px;
  text-align: center;
}
```
FILE: chart.js
```js
const svg = document.getElementById("chart");
const NS = "http://www.w3.org/2000/svg";

const STEP = 10.9;
const RED = "#e81809";
const BLUE = "#1158c8";
const AXIS = 1792;

// 봉 번호 -> x, 패널별 단위 -> y
const px = i => 14.3 + i * STEP;
const priceY = v => 140 + v / 3;
const subY = v => 560 + v / 3;

function add(tag, attrs, text) {
  const el = document.createElementNS(NS, tag);
  for (const k in attrs) el.setAttribute(k, attrs[k]);
  if (text !== undefined) el.textContent = text;
  svg.appendChild(el);
  return el;
}
function line(x1, y1, x2, y2, stroke, w = 1) {
  add("line", { x1, y1, x2, y2, stroke, "stroke-width": w });
}
function rect(x, y, width, height, fill) {
  return add("rect", { x, y, width, height, fill });
}
function label(x, y, text, fill, cls = "", anchor = "start") {
  const el = add("text", { x, y, class: cls, "text-anchor": anchor }, text);
  if (fill) el.style.fill = fill;
}
function parse(str) {
  return str.split(" ").map(p => p.split(",").map(Number));
}
function plot(points, y, stroke, w) {
  add("polyline", {
    points: points.map(p => px(p[0]).toFixed(1) + "," + y(p[1]).toFixed(1)).join(" "),
    stroke, "stroke-width": w
  });
}
function at(points, i) {
  for (let k = 1; k < points.length; k++) {
    const [a, va] = points[k - 1];
    const [b, vb] = points[k];
    if (i <= b) return va + (vb - va) * (i - a) / (b - a);
  }
  return points[points.length - 1][1];
}

// 색, 몸통 위, 몸통 아래, 고가, 저가
const candles = `b 796 824 755 828;r 785 824 755 828;b 781 879 768 914;b 841 958 822 958;r 908 999 900 999;b 883 902 860 938;b 879 973 877 983;r 938 969 927 983;b 965 985 953 990;b 1028 1067 1020 1094;r 1066 1083 1040 1094;b 1077 1127 1066 1143;r 1010 1097 983 1097;r 987 1045 979 1064;b 954 966 927 985;b 971 974 916 990;b 972 996 942 1026;b 879 914 852 965;b 950 1022 935 1022;r 994 1026 972 1087;b 994 1007 966 1038;r 957 989 922 989;b 983 988 927 996;r 935 966 925 973;r 927 930 912 944;r 916 929 855 960;r 939 953 901 976;r 934 967 927 967;r 893 936 880 936;r 879 895 841 895;r 857 860 795 874;b 882 936 882 936;r 845 862 822 895;b 815 925 815 925;r 845 917 845 917;b 825 858 825 858;b 843 847 781 862;b 837 913 837 913;b 879 936 862 936;b 957 975 927 981;r 938 959 930 959;r 916 940 905 952;b 949 979 940 988;b 980 1038 980 1043;r 1009 1053 1009 1053;r 998 1023 988 1031;r 967 970 942 981;r 968 971 952 985;b 971 974 950 988;b 998 1026 980 1026;r 1028 1045 1014 1053;b 1039 1053 1022 1053;r 983 1045 978 1045;r 971 1015 953 1015;b 961 996 930 1012;r 966 990 949 996;b 968 972 949 987;r 1010 1014 987 1019;r 999 1012 983 1025;b 1008 1041 996 1045;b 1014 1052 1014 1057;b 1040 1044 1024 1066;b 1070 1109 1062 1112;r 1107 1110 1096 1150;r 1099 1116 1076 1116;b 1114 1138 1114 1150;b 969 1109 930 1109;b 1091 1168 1084 1172;b 1170 1205 1156 1228;r 1197 1229 1177 1229;r 1190 1193 1140 1193;r 1068 1195 1068 1195;r 1020 1094 1014 1102;b 1036 1045 980 1066;r 1010 1026 993 1038;b 1006 1031 1006 1064;b 1039 1064 1039 1071;r 1028 1053 1020 1058;b 1036 1068 1024 1080;r 1061 1064 1024 1074;r 1063 1074 1040 1086;b 1054 1068 1048 1068;r 870 1010 803 1022;r 856 868 798 877;b 841 920 788 920;b 912 929 886 937;r 870 937 870 948;b 864 896 822 914;r 892 895 878 909;b 885 889 871 908;b 893 928 893 928;r 922 925 905 925;b 907 917 886 921;r 893 921 886 960;b 893 974 893 985;b 966 1014 966 1014;r 961 1007 961 1007;b 963 1023 963 1023;r 950 996 901 1018;r 977 989 965 989;r 849 962 838 978;r 769 849 712 853;r 739 802 692 836;b 703 742 703 765;b 740 816 724 830;b 825 943 815 966;b 928 935 928 962;b 939 970 934 990;b 957 975 946 975;r 935 970 901 970;b 935 977 935 977;b 976 1005 976 1005;b 995 1004 977 1014;b 1020 1038 1008 1043;r 1031 1035 1012 1064;b 1028 1095 1020 1099;r 1009 1083 990 1083;b 1012 1056 1012 1080;r 994 1031 983 1042;r 930 993 912 1003;b 695 726 611 731;b 717 727 684 791;r 724 740 695 757;r 720 723 660 735;r 705 708 676 746;r 582 708 559 735;b 608 673 604 700;b 684 710 668 726;r 541 688 397 743;r 403 596 312 607;r 376 404 233 431;b 388 411 342 453;b 424 471 405 471;r 230 457 94 460;b 222 335 222 363`
  .split(";").map(row => {
    const [kind, ...v] = row.split(" ");
    return [kind, ...v.map(Number)];
  });

const upper = parse("0,515 1,519 2,515 3,509 4,500 5,497 6,493 7,488 8,483 9,469 10,456 11,449 12,452 13,467 14,506 15,566 16,640 17,700 18,765 19,795 20,825 21,857 22,875 23,880 25,882 27,879 28,872 29,858 30,846 31,851 32,846 33,842 34,832 35,818 36,810 37,807 38,810 39,816 40,822 42,822 43,815 44,807 46,804 48,804 49,808 50,819 51,816 52,830 53,838 54,849 55,868 56,898 57,918 58,928 60,937 61,946 62,940 63,930 64,926 65,924 66,931 67,932 68,926 69,920 70,916 71,920 72,927 74,938 75,945 76,958 77,965 78,970 79,975 81,977 82,938 83,905 84,868 85,848 86,826 87,812 88,807 90,810 92,806 94,800 95,803 97,807 98,811 99,818 100,823 101,816 102,785 103,757 104,748 105,743 106,745 108,748 113,750 114,750 115,744 118,744 119,738 120,709 121,694 122,690 123,681 124,664 125,612 126,586 127,566 128,515 129,465 129.6,415 130,372 131,320 132,285 133,220 134,178");
const middle = parse("0,700 2,714 4,736 6,750 8,770 10,795 11,815 13,840 15,880 16,910 17,930 19,958 20,970 22,980 23,985 27,985 28,978 29,971 30,960 32,942 34,931 36,918 38,912 40,905 42,906 44,914 47,920 49,927 51,945 53,958 55,972 57,983 59,993 61,1003 63,1015 65,1023 67,1042 68,1055 70,1066 74,1072 78,1082 80,1088 81,1089 82,1080 83,1068 84,1056 86,1036 87,1025 88,1010 89,993 90,980 92,963 94,952 96,945 98,937 100,928 101,915 102,905 104,898 106,899 108,905 110,913 112,922 113,927 115,933 117,940 119,938 120,928 122,925 124,918 125,903 127,878 128,855 129,830 130,800 132,735 134,668");
const conversion = parse("0,638 1,632 2,675 3,700 4,725 5,770 6,802 7,825 8,880 9,925 10,935 11,975 12,997 13,1000 14,1012 15,1028 16,1028 17,1000 18,997 19,992 20,978 21,970 26,970 27,965 28,945 29,915 30,895 31,890 32,885 35,883 36,857 37,859 38,862 39,879 42,882 43,900 44,925 45,945 46,960 47,975 48,980 49,983 50,998 51,1006 53,1006 60,1010 61,1022 62,1035 63,1048 64,1050 65,1065 66,1048 67,1045 68,1080 74,1085 75,1105 77,1105 78,1093 79,1080 80,1040 81,1032 82,942 83,942 89,938 90,915 91,868 92,868 93,885 94,893 95,910 96,940 97,960 98,957 99,955 100,932 101,870 102,858 106,858 107,842 110,842 111,852 112,865 113,930 114,985 115,998 118,1003 119,1000 120,857 124,850 125,820 127,778 128,620 129,560 130,495 131,489 132,489 133,418 134,418");
const base = parse("0,448 1,448 2,545 3,595 4,612 5,717 8,717 9,765 10,767 11,790 20,790 21,793 22,842 23,872 24,897 25,948 27,955 28,965 30,970 35,970 36,962 37,942 38,935 43,935 44,930 45,917 50,917 51,924 60,924 61,950 62,980 63,1010 64,1028 65,1030 67,1048 68,1080 80,1082 81,1085 82,1018 83,1014 94,1010 95,985 96,965 99,950 100,940 101,905 102,888 106,886 107,856 112,858 113,868 114,878 115,894 119,894 120,856 124,856 125,830 127,830 128,745 129,705 130,665 132,665 133,598 134,598");
const spanB = parse("0,394 1,394 2,430 3,443 4,510 13,510 14,492 19,492 20,470 21,439 26,439 27,471 28,492 29,513 33,513 34,558 35,558 36,584 42,584 43,588 50,588 51,592 52,592 53,660 54,686 55,686 56,787 71,787 72,792 73,832 74,870 75,890 76,945 77,955 78,960 86,960 87,963 91,963 92,975 93,1006 125,1008 126,972 127,960 144,960 145,920 146,904 147,904 148,855 149,855 150,828 152,828 153,745 154,705 155,664 157,664 158,596 159,596");
const spanA = parse("0,234 1,213 2,266 4,266 5,340 6,362 7,409 9,409 10,445 11,461 12,461 13,525 14,570 15,594 16,598 17,603 18,585 19,567 20,545 23,541 24,541");
for (let i = 25; i < 160; i++) {
  spanA.push([i, (at(conversion, i - 25) + at(base, i - 25)) / 2]);
}
const obv = parse("0,527 1,521 2,527 3,535 4,526 5,520 6,526 8,522 9,529 11,534 12,527 14,520 16,527 17,503 18,514 19,508 20,510 21,504 24,503 25,497 27,496 28,491 29,488 31,489 32,478 33,483 35,484 36,478 38,489 39,492 41,486 43,491 45,488 47,486 49,492 51,497 53,489 56,489 57,493 58,489 60,493 61,489 62,493 64,489 65,492 66,466 68,476 70,468 72,455 73,460 74,454 76,462 78,460 81,460 82,420 83,398 84,412 85,419 86,410 87,418 90,411 92,405 93,410 97,410 98,403 99,404 100,385 101,365 102,342 103,350 104,357 105,370 106,365 107,372 108,376 109,369 111,377 113,384 115,381 116,383 118,382 119,374 120,293 121,314 122,314 123,302 124,295 125,270 126,278 127,287 128,225 129,175 130,138 131,146 132,156 133,98 134,116");
const signal = parse("0,516 3,524 10,526 16,526 18,520 24,512 28,504 30,498 36,486 44,488 50,492 58,490 65,492 66,487 70,480 72,470 75,464 81,460 83,441 87,425 92,415 95,411 99,409 101,400 103,380 105,374 110,373 114,379 118,380 119,376 121,350 123,336 125,316 127,304 129,265 130,240 132,205 134,168");
const intensity = parse("0,602 1,602 2,615 3,632 4,616 5,617 6,628 7,625 10,629 11,631 12,624 13,620 15,622 17,625 18,648 19,631 21,631 22,640 24,634 26,639 28,631 29,636 31,651 32,647 33,666 34,658 35,658 36,669 38,687 40,688 41,684 43,693 45,689 46,691 51,691 52,688 59,688 60,691 65,692 66,800 67,812 69,811 70,816 71,800 72,789 73,797 75,793 76,797 77,793 78,797 81,797 82,717 83,730 84,766 85,770 86,759 87,770 91,770 92,774 93,766 94,778 95,781 97,777 99,774 100,745 101,728 102,702 103,708 104,718 105,748 106,744 109,748 111,754 114,755 115,763 116,756 118,755 119,748 120,926 121,919 122,919 123,930 124,932 125,860 126,868 127,873 128,790 129,675 130,740 131,745 132,756 133,638 134,673");

// 배경 축
rect(AXIS, 149, 81, 748, "#d6e1ef");
rect(8, 874, 1865, 23, "#d6e1ef");

// 격자
const priceTicks = [["22,000", 181], ["21,000", 286], ["", 387], ["19,000", 489], ["18,000", 590], ["17,000", 694], ["16,000", 796], ["15,000", 897], ["14,000", 999], ["13,000", 1100], ["12,000", 1205]];
const obvTicks = [["140,000K", 106], ["130,000K", 185], ["120,000K", 264], ["110,000K", 340], ["100,000K", 418], ["90,000K", 496]];
const intensityTicks = [["30,000M", 710], ["20,000M", 883]];
const months = [["10", 63], ["11", 270], ["12", 510], ["2023/01", 739], ["02", 957], ["03", 1174], ["04", 1415]];

line(8, priceY(80), AXIS, priceY(80), "#d8d8d8");
priceTicks.forEach(t => line(8, priceY(t[1]), AXIS, priceY(t[1]), "#d8d8d8"));
obvTicks.concat(intensityTicks).forEach(t => line(8, subY(t[1]), AXIS, subY(t[1]), "#d8d8d8"));
months.forEach(m => line(m[1], 149, m[1], 874, "#d8d8d8"));

// 매물대
[[240, 391], [338, 747], [434, 57], [533, 596], [630, 160], [728, 1186], [825, 1264], [922, 1702], [1020, 782], [1118, 417]].forEach(([v, x], n) => {
  const bar = rect(8, priceY(v), x - 8, 31, "#00ffff");
  if (n === 1) bar.setAttribute("stroke", "#888");
});

// 구름대
for (let i = 0; i < 160; i++) {
  const a = at(spanA, i);
  const b = at(spanB, i);
  line(px(i), priceY(a), px(i), priceY(b), a < b ? "#f6a56c" : "#6a8cf0");
}
plot(spanA, priceY, "#f9a267", 2);
plot(spanB, priceY, "#6a8cf0", 2);
plot(conversion, priceY, "#0e9a82", 3);
plot(base, priceY, "#7a7a7a", 3);

// 후행스팬: 종가를 25봉 앞으로
plot(candles.slice(25).map((c, i) => [i, c[0] === "r" ? c[1] : c[2]]), priceY, "#a020dc", 2);

plot(middle, priceY, "#d808e4", 3);
plot(upper, priceY, "#e60000", 3.5);

candles.forEach(([kind, top, bottom, high, low], i) => {
  const color = kind === "r" ? RED : BLUE;
  line(px(i), priceY(high), px(i), priceY(low), color);
  rect(px(i) - 4.5, priceY(top), 9, (bottom - top) / 3, color);
});

// 차트 위 표시
label(673, 478, "배당락(0,00%)", "#24503c");
line(722, 480, 722, 502, RED);
add("path", { d: "M715 500h14l-7 8z", fill: "#f00" });
label(593, 552, "최저 11,750 (01/03)", "#0808f0");
add("path", { d: "M731 546h12v-6l7 7-7 7v-6h-12z", fill: "#00f" });
label(1302, 181, "최고 22,850 (04/07)", "#f01010");
add("path", { d: "M1440 176h12v-5l8 6-8 6v-5h-12z", fill: "#f00" });
add("ellipse", { cx: 1446, cy: 196, rx: 27, ry: 7, fill: "#1c58b8", stroke: "#0000e0" });
line(px(133), 190, px(133), 202, "#109060");
rect(1415, 185, 7, 7, "#00f");
rect(1470, 200, 7, 7, "#00f");

// 범례
function marker(x, y) {
  add("rect", { x, y, width: 5, height: 7, fill: "#bbb", stroke: "#777" });
}
marker(13, 157);
add("rect", { x: 22, y: 151, width: 178, height: 18, fill: "#e8e8e8", stroke: "#bbb" });
label(27, 166, "넥슨게임즈 매물대 수(10)", "#333", "t16");
marker(210, 157);
label(224, 166, "전환선 9", "#0e9a82", "t16");
label(292, 166, "기준선 26", "#7a7a7a", "t16");
label(367, 166, "후행스팬 26", "#a020dc", "t16");
label(457, 166, "선행스팬1 9,26", "#f9a267");
label(567, 166, "선행스팬2 52,26", "#6a8cf0");
marker(681, 157);
label(694, 166, "Bollinger Bands중심선 20,2", "#d808e4", "t16");
label(893, 166, "상한선", "#f00000", "t16");
add("path", { d: "M16 175h16v15H16zM19 178h10v9H19zM22 178v9M26 178v9M19 181h10M19 184h10", fill: "#ddd", stroke: "#333" });

[["전환선 9: 19,700", "#0e9a82", 1], ["기준선 26: 17,950", "#7a7a7a", 0], ["후행스팬 26: 20,500", "#a020dc", 1], ["선행스팬1 9,26: 18,825", "#f9a267", 1], ["선행스팬2 52,26: 17,950", "#6a8cf0", 1]].forEach(([t, c, b], n) => {
  label(1785, 504 + n * 15, t, c, b ? "t16 bold" : "t16", "end");
});

marker(13, 582);
label(27, 591, "OBV", "#ff6a00");
label(68, 591, "Signal 9", "#8c2090");
plot(obv, subY, "#ff6a00", 3.4);
plot(signal, subY, "#8c2090", 1.2);
marker(13, 751);
label(27, 760, "Bostian`s Intraday Intensity Index", "#ff6a00", "t16");
plot(intensity, subY, "#ff6a00", 3.4);

// 축 글자
for (let y = 188; y < 570; y += 6.83) line(AXIS, y, AXIS + 3, y, "#888");
for (let n = 0; n < 11; n++) line(AXIS, 583 + n * 13, AXIS + 3, 583 + n * 13, "#888");
for (let n = 0; n < 9; n++) line(AXIS, 751 + n * 11.5, AXIS + 3, 751 + n * 11.5, "#888");
priceTicks.forEach(([t, v]) => {
  line(AXIS, priceY(v), AXIS + 8, priceY(v), "#888");
  label(1802, priceY(v) + 4, t);
});
obvTicks.concat(intensityTicks).forEach(([t, v]) => {
  line(AXIS, subY(v), AXIS + 8, subY(v), "#888");
  label(1802, subY(v) + 4, t, "", "t14");
});
label(1793, 165, "LC:74,47", "#e81c14");
label(1793, 180, "HC:-10,28", "#1b62cc");
rect(1798, 242, 72, 17, BLUE);
label(1802, 256, "20,500", "#fff");
label(1802, 271, "-4,87%", "#1b62cc");

[583, 752].forEach(y => {
  rect(1860, y - 4, 10, 9, "#444");
  add("path", { d: `M1863 ${y - 2}l4 5M1867 ${y - 2}l-4 5`, stroke: "#fff" });
});

label(10, 890, "2022/09");
months.forEach(([t, x]) => {
  line(x, 874, x, 897, "#999");
  label(x + 1, 890, t);
});
label(1802, 890, "04/10");

// 패널 경계
[574, 743, 874].forEach(y => line(8, y, 1873, y, "#999"));
line(AXIS, 149, AXIS, 897, "#999");
add("rect", { x: 8.5, y: 149.5, width: 1864, height: 747, fill: "none", stroke: "#999" });
```
